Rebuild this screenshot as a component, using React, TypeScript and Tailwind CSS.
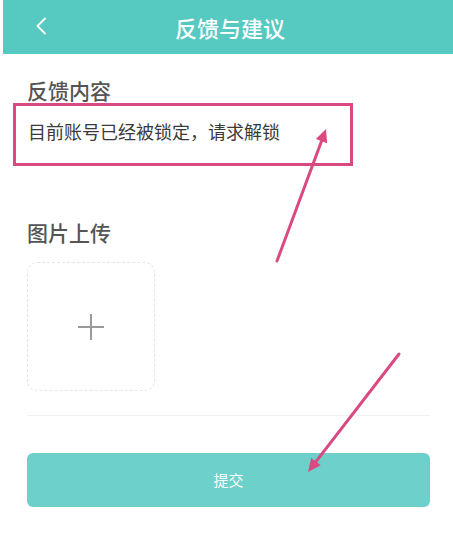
const Arrow = ({ x1, y1, x2, y2 }: { x1: number; y1: number; x2: number; y2: number }) => {
  const dx = x2 - x1;
  const dy = y2 - y1;
  const len = Math.sqrt(dx * dx + dy * dy);
  const ux = dx / len;
  const uy = dy / len;
  const head = 13;
  const half = 6;
  const bx = x2 - ux * head;
  const by = y2 - uy * head;
  const points = `${x2},${y2} ${bx - uy * half},${by + ux * half} ${bx + uy * half},${by - ux * half}`;
  return (
    <g>
      <line x1={x1} y1={y1} x2={bx} y2={by} stroke="#d94a82" strokeWidth="3" strokeLinecap="round" />
      <polygon points={points} fill="#d94a82" />
    </g>
  );
};

export default function App() {
  return (
    <div className="relative w-[453px] h-[542px] bg-white font-['Noto_Sans_CJK_SC',sans-serif] overflow-hidden">
      <header className="relative ml-[3px] h-[54px] bg-[#56c9c1] flex items-center justify-center">
        <svg className="absolute left-[30px] top-[17px]" width="16" height="18" viewBox="0 0 16 18" fill="none">
          <path d="M12 1.5 L4.5 9 L12 16.5" stroke="white" strokeWidth="1.8" strokeLinecap="round" strokeLinejoin="round" />
        </svg>
        <h1 className="text-[22px] leading-none text-white font-medium pl-[4px]">反馈与建议</h1>
      </header>

      <main className="pl-[27px] pr-[23px]">
        <h2 className="mt-[22px] h-[28px] leading-[28px] text-[21px] font-medium text-[#555555]">反馈内容</h2>
        <p className="mt-[15px] h-[24px] leading-[24px] pl-[1px] text-[18px] text-[#3a3a3a]">
          目前账号已经被锁定，请求解锁
        </p>

        <h2 className="mt-[75px] h-[28px] leading-[28px] text-[21px] font-medium text-[#555555]">图片上传</h2>
        <button className="mt-[16px] w-[128px] h-[129px] rounded-[10px] border border-dashed border-[#e6e6e6] flex items-center justify-center">
          <svg width="28" height="28" viewBox="0 0 28 28">
            <path d="M14 1 V27 M1 14 H27" stroke="#9a9a9a" strokeWidth="2" />
          </svg>
        </button>

        <div className="mt-[24px] h-px bg-[#f2f2f2]" />

        <button className="mt-[37px] w-full h-[54px] rounded-[6px] bg-[#6dd0ca] text-white text-[15px]">
          提交
        </button>
      </main>

      <div className="absolute left-[13px] top-[103px] w-[340px] h-[63px] border-[3px] border-[#d94a82]" />

      <svg className="absolute inset-0 pointer-events-none" width="453" height="542">
        <Arrow x1={277} y1={261} x2={326} y2={129} />
        <Arrow x1={399} y1={354} x2={308} y2={472} />
      </svg>
    </div>
  );
}
